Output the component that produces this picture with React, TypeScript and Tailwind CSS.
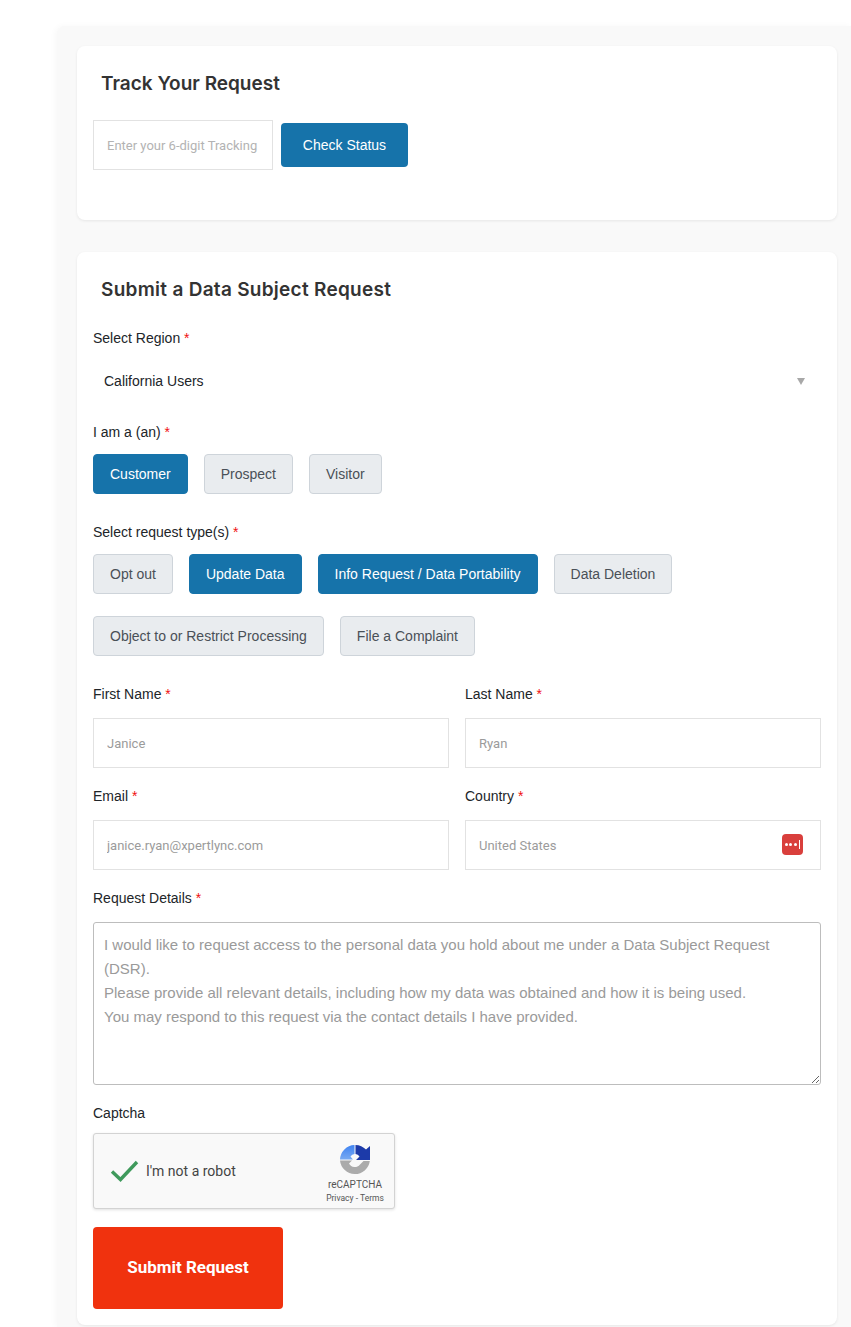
import React from "react";

const SANS = "font-['Liberation_Sans',Arial,sans-serif]";
const HEADING = "font-['Inter',sans-serif] text-[19px] font-semibold leading-[22px] text-[#333]";
const FIELD =
  "h-[50px] w-full border border-[#e2e2e2] bg-white px-[13px] text-[13px] font-['Roboto',sans-serif] text-[#333] placeholder:text-[#9b9b9b] outline-none";

function Label({ text, gap, required = true }: { text: string; gap: string; required?: boolean }) {
  return (
    <div className={`h-4 text-[14px] leading-4 text-[#212529] ${gap}`}>
      {text}
      {required && <span className="text-[#f01010]"> *</span>}
    </div>
  );
}

function Pill({ text, active = false }: { text: string; active?: boolean }) {
  return (
    <button
      type="button"
      className={
        active
          ? "h-10 rounded border border-[#1673aa] bg-[#1673aa] px-4 text-[14px] text-white"
          : "h-10 rounded border border-[#ced4da] bg-[#e9ecef] px-4 text-[14px] text-[#495057]"
      }
    >
      {text}
    </button>
  );
}

function RecaptchaLogo() {
  return (
    <svg viewBox="0 0 30 30" className="h-[30px] w-[30px]">
      <defs>
        <linearGradient id="rc-blue" x1="0" y1="0" x2="0" y2="1">
          <stop offset="0" stopColor="#3f83f2" />
          <stop offset="1" stopColor="#78aaf2" />
        </linearGradient>
      </defs>
      <path d="M15.5 0A15 15 0 0 1 26 4.6L30 1V15H16L19.5 11.5A6 6 0 0 0 15.5 9Z" fill="#1c3aa9" />
      <path d="M14.5 0A15 15 0 0 0 0 14.5H13L10.5 11.5A6 6 0 0 1 14.5 9Z" fill="url(#rc-blue)" />
      <path d="M0 15.5H12L9 18.5A6.5 6.5 0 0 0 20 19.5L23.5 16H29.8A15 15 0 0 1 0 15.5Z" fill="#ababab" />
    </svg>
  );
}

export default function App() {
  return (
    <div className={`h-[1327px] overflow-hidden bg-white pl-[57px] pt-[26px] ${SANS}`}>
      <div className="h-full rounded-tl-lg bg-[#f9f9f9] pl-5 pr-[14px] pt-5 shadow-[-2px_0_6px_rgba(0,0,0,0.03)]">
        <section className="h-[174px] rounded-lg bg-white px-4 pt-[27px] shadow-[0_1px_3px_rgba(0,0,0,0.08)]">
          <h2 className={`px-2 ${HEADING}`}>Track Your Request</h2>
          <div className="mt-[25px] flex items-center gap-2">
            <input
              className={`${FIELD} !w-[180px] placeholder:text-[#b3b3b3]`}
              placeholder="Enter your 6-digit Tracking"
            />
            <button type="button" className="h-11 w-[127px] rounded bg-[#1673aa] text-[14px] text-white">
              Check Status
            </button>
          </div>
        </section>

        <section className="mt-8 h-[1073px] rounded-lg bg-white px-4 pt-[27px] shadow-[0_1px_3px_rgba(0,0,0,0.08)]">
          <h2 className={`px-2 tracking-[0.28px] ${HEADING}`}>Submit a Data Subject Request</h2>

          <div className="mt-[29px]">
            <Label text="Select Region" gap="mb-[10px]" />
          </div>
          <div className="relative flex h-[50px] items-center">
            <select className="w-full appearance-none bg-white px-[11px] text-[14px] text-[#212529] outline-none">
              <option>California Users</option>
            </select>
            <span className="pointer-events-none absolute right-4 top-[22px] border-x-[4px] border-t-[7px] border-x-transparent border-t-[#a8a8a8]" />
          </div>

          <div className="mt-[18px]">
            <Label text="I am a (an)" gap="mb-[14px]" />
          </div>
          <div className="flex gap-4">
            <Pill text="Customer" active />
            <Pill text="Prospect" />
            <Pill text="Visitor" />
          </div>

          <div className="mt-[30px]">
            <Label text="Select request type(s)" gap="mb-[14px]" />
          </div>
          <div className="flex flex-wrap gap-x-4 gap-y-[22px]">
            <Pill text="Opt out" />
            <Pill text="Update Data" active />
            <Pill text="Info Request / Data Portability" active />
            <Pill text="Data Deletion" />
            <Pill text="Object to or Restrict Processing" />
            <Pill text="File a Complaint" />
          </div>

          <div className="mt-[30px] grid grid-cols-[356px_356px] gap-x-4 gap-y-5">
            <div>
              <Label text="First Name" gap="mb-4" />
              <input className={FIELD} placeholder="Janice" />
            </div>
            <div>
              <Label text="Last Name" gap="mb-4" />
              <input className={FIELD} placeholder="Ryan" />
            </div>
            <div>
              <Label text="Email" gap="mb-4" />
              <input className={FIELD} placeholder="janice.ryan@xpertlync.com" />
            </div>
            <div className="relative">
              <Label text="Country" gap="mb-4" />
              <input className={FIELD} placeholder="United States" />
              <span className="absolute right-[18px] top-[46px] flex h-[21px] w-[21px] items-center justify-center gap-[1.5px] rounded-[4px] bg-[#d93f3c]">
                <i className="h-[3px] w-[3px] rounded-full bg-white" />
                <i className="h-[3px] w-[3px] rounded-full bg-white" />
                <i className="h-[3px] w-[3px] rounded-full bg-white" />
                <i className="ml-[1px] h-[9px] w-[1px] bg-white" />
              </span>
            </div>
          </div>

          <div className="mt-5">
            <Label text="Request Details" gap="mb-4" />
          </div>
          <textarea
            className="block h-[163px] w-full rounded-[3px] border border-[#bdbdbd] px-[10px] py-[10px] text-[15px] leading-6 text-[#333] outline-none placeholder:text-[#9a9a9a]"
            placeholder={
              "I would like to request access to the personal data you hold about me under a Data Subject Request (DSR).\nPlease provide all relevant details, including how my data was obtained and how it is being used.\nYou may respond to this request via the contact details I have provided."
            }
          />

          <div className="mt-5">
            <Label text="Captcha" gap="mb-3" required={false} />
          </div>
          <div className="flex h-[76px] w-[302px] items-center justify-between rounded-[3px] border border-[#d3d3d3] bg-[#f9f9f9] pl-4 pr-[10px] shadow-[0_1px_3px_rgba(0,0,0,0.12)] font-['Roboto',sans-serif]">
            <div className="flex items-center gap-[6px]">
              <svg viewBox="0 0 30 24" className="h-6 w-[30px]">
                <path d="M2 12.5 L10.5 20.5 L27 3" fill="none" stroke="#3f9a5c" strokeWidth="3.4" />
              </svg>
              <span className="text-[14px] text-[#444]">I'm not a robot</span>
            </div>
            <div className="flex w-[58px] flex-col items-center pt-[7px]">
              <RecaptchaLogo />
              <div className="mt-1 text-[10px] leading-[12px] text-[#555]">reCAPTCHA</div>
              <div className="mt-[1px] whitespace-nowrap text-[8.5px] leading-[12px] text-[#555]">Privacy - Terms</div>
            </div>
          </div>

          <button
            type="button"
            className="mt-[18px] h-[82px] w-[190px] rounded bg-[#f0320e] font-['Roboto',sans-serif] text-[17px] font-bold text-white"
          >
            Submit Request
          </button>
        </section>
      </div>
    </div>
  );
}
